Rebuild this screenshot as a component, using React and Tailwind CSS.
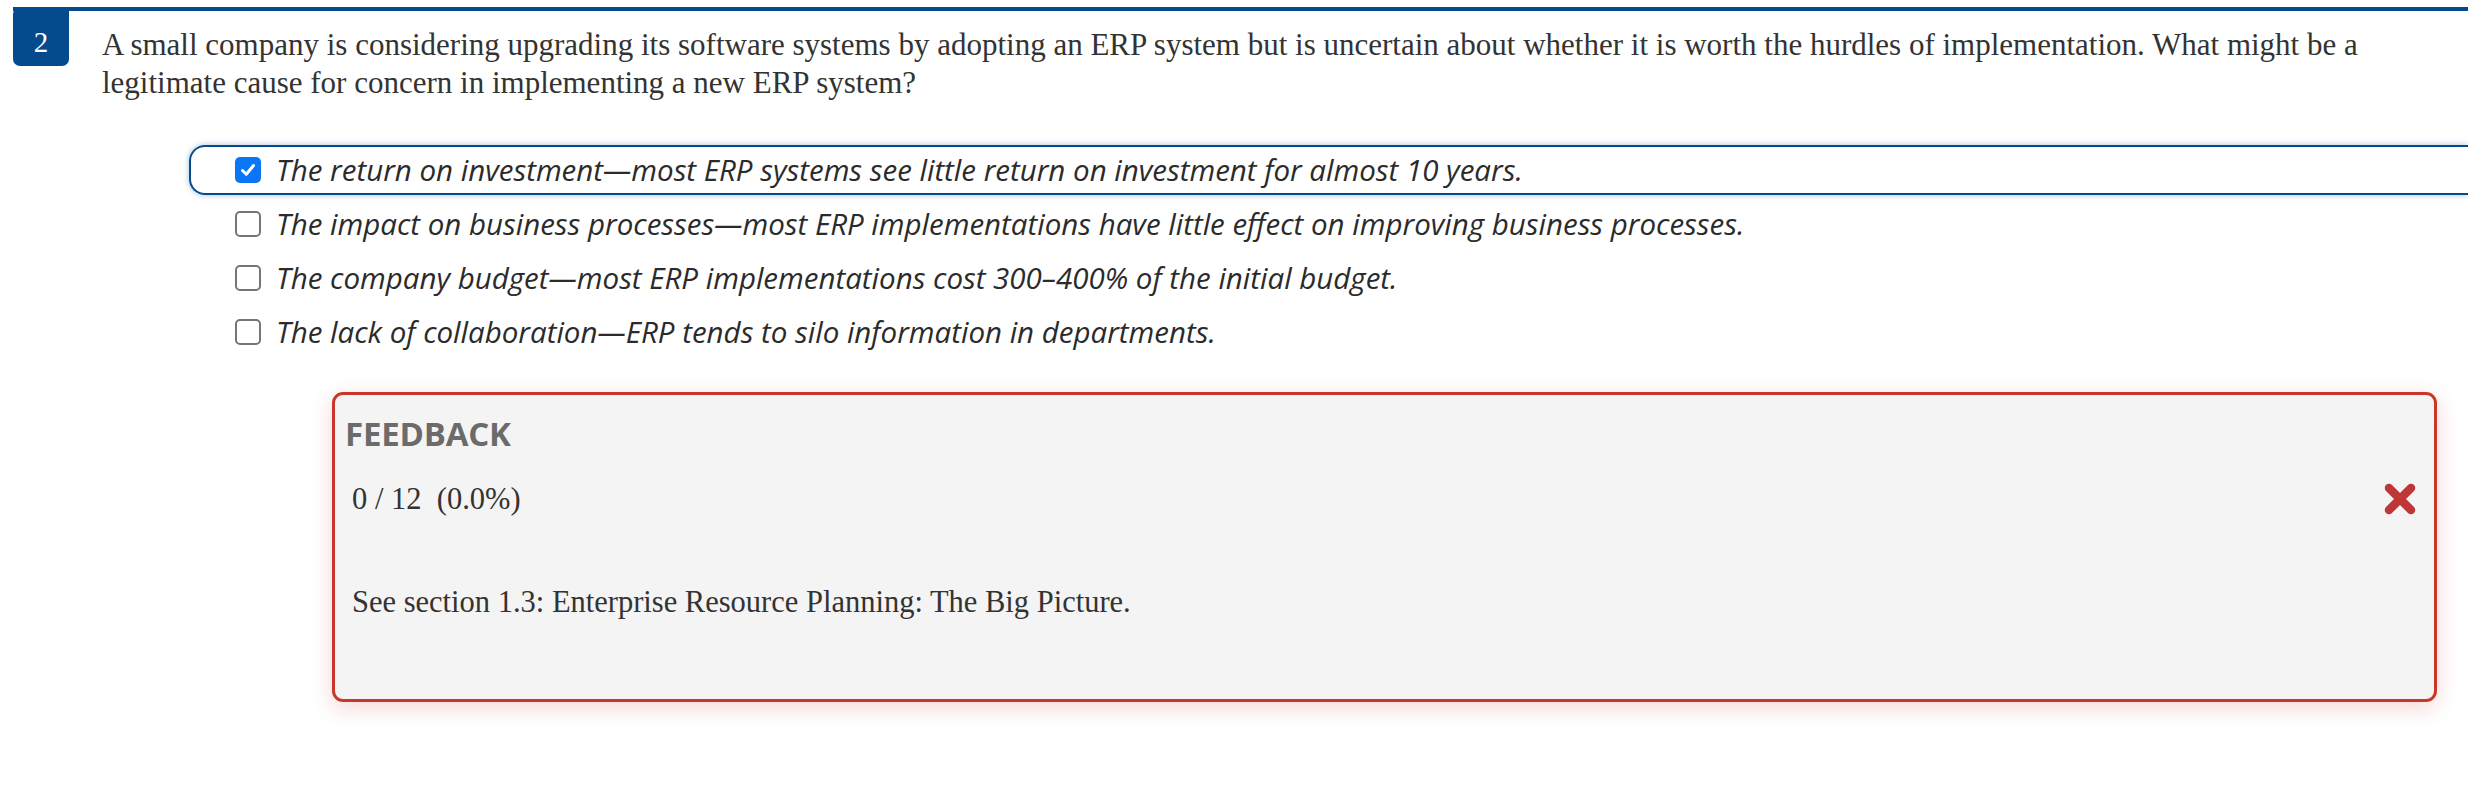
import React from 'react';

const options = [
  { id: 'a', text: 'The return on investment—most ERP systems see little return on investment for almost 10 years.', checked: true },
  { id: 'b', text: 'The impact on business processes—most ERP implementations have little effect on improving business processes.' },
  { id: 'c', text: 'The company budget—most ERP implementations cost 300–400% of the initial budget.' },
  { id: 'd', text: 'The lack of collaboration—ERP tends to silo information in departments.' },
];

function CheckBox({ checked }) {
  if (checked) {
    return (
      <span className="w-[26px] h-[26px] rounded-[5px] bg-[#0a75f5] flex items-center justify-center shrink-0">
        <svg width="18" height="18" viewBox="0 0 18 18">
          <path d="M3.5 9.5 L7.3 13.2 L14.5 4.5" fill="none" stroke="white" strokeWidth="3" strokeLinecap="round" strokeLinejoin="round" />
        </svg>
      </span>
    );
  }
  return <span className="w-[26px] h-[26px] rounded-[5px] border-2 border-[#767676] bg-white shrink-0" />;
}

export default function App() {
  return (
    <div className="w-[2468px] h-[794px] bg-white overflow-hidden text-[#333]">
      <div className="ml-[13px] mt-[7px] border-t-4 border-[#034b8c] flex">
        <div className="-mt-[4px] w-[56px] h-[59px] bg-[#034b8c] rounded-b-[7px] rounded-tl-[7px] flex justify-center pt-[21px] text-white text-[29px] leading-none font-['Liberation_Serif',serif] shrink-0">
          2
        </div>
        <div className="w-[2320px] pl-[33px] pt-[15px] text-[31px] leading-[38px] font-['Liberation_Serif',serif]">
          A small company is considering upgrading its software systems by adopting an ERP system but is uncertain about whether it is worth the hurdles of implementation. What might be a legitimate cause for concern in implementing a new ERP system?
        </div>
      </div>

      <div className="mt-[43px] ml-[189px] flex flex-col gap-[4px] font-['Open_Sans',sans-serif] italic text-[29.5px] leading-[38px] text-[#2b2b2b]">
        {options.map((o) => (
          <div
            key={o.id}
            className={
              o.checked
                ? 'h-[50px] flex items-center gap-[15px] pl-[44px] border-[2.5px] border-r-0 border-[#034b8c] rounded-l-[16px] shadow-[0_0_6px_rgba(3,75,140,0.35)]'
                : 'h-[50px] flex items-center gap-[15px] pl-[44px] border-[2.5px] border-transparent'
            }
          >
            <CheckBox checked={o.checked} />
            <span className="whitespace-nowrap">{o.text}</span>
          </div>
        ))}
      </div>

      <div className="mt-[35px] ml-[332px] w-[2105px] h-[310px] bg-[#f4f4f4] border-[3px] border-[#c9372c] rounded-[11px] shadow-[0_6px_22px_rgba(201,55,44,0.2)] pt-[16px] pl-[10px] pr-[17px]">
        <div className="font-['Open_Sans',sans-serif] font-bold text-[33px] leading-[45px] text-[#6b6b6b] tracking-[-0.2px]">
          FEEDBACK
        </div>
        <div className="flex items-center justify-between pl-[7px] mt-[23px] font-['Liberation_Serif',serif] text-[30.5px] leading-[40px]">
          <span className="whitespace-pre">0 / 12  (0.0%)</span>
          <svg width="34" height="34" viewBox="0 0 34 34">
            <path d="M6 6 L28 28 M28 6 L6 28" stroke="#bf3636" strokeWidth="8.5" strokeLinecap="round" />
          </svg>
        </div>
        <div className="pl-[7px] mt-[63px] font-['Liberation_Serif',serif] text-[30.5px] leading-[40px]">
          See section 1.3: Enterprise Resource Planning: The Big Picture.
        </div>
      </div>
    </div>
  );
}
